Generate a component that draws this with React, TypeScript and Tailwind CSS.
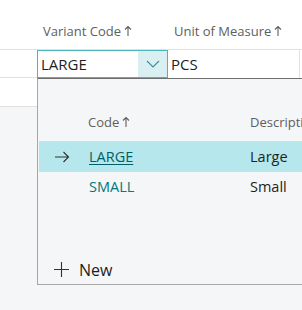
function SortArrow() {
  return (
    <svg width="8" height="12" viewBox="0 0 8 12" className="inline-block ml-[3px] -mt-[3px]">
      <path d="M4 11V1.5M1 4.5L4 1.5L7 4.5" fill="none" stroke="currentColor" strokeWidth="1.1" />
    </svg>
  );
}

function LookupPanel() {
  return (
    <div className="absolute left-[37px] top-[78px] right-0 h-[207px] bg-[#f5f6f8] border-l border-b border-t border-[#a6a6a6] border-t-[#6e6e6e] flex flex-col overflow-hidden">
      <div className="h-[62px] flex items-end pb-[9px] text-[13px] text-[#605e5c] whitespace-nowrap">
        <div className="w-[50px] shrink-0" />
        <div className="w-[162px] shrink-0">
          Code
          <SortArrow />
        </div>
        <div className="shrink-0">Description</div>
      </div>
      <div className="ml-[1px] h-[31px] flex items-center bg-[#b6e7ec] border-t border-[#dcdcdc] text-[14.5px] whitespace-nowrap">
        <div className="w-[50px] shrink-0 pl-[15px] text-[#323130]">
          <svg width="16" height="12" viewBox="0 0 16 12" className="block">
            <path d="M1 6H14.5M9.5 1L14.5 6L9.5 11" fill="none" stroke="#323130" strokeWidth="1.1" />
          </svg>
        </div>
        <div className="w-[161px] shrink-0 text-[#005f66] underline underline-offset-2">LARGE</div>
        <div className="text-[#201f1e]">Large</div>
      </div>
      <div className="ml-[1px] h-[29px] flex items-center text-[14.5px] whitespace-nowrap">
        <div className="w-[50px] shrink-0" />
        <div className="w-[161px] shrink-0 text-[#00787f]">SMALL</div>
        <div className="text-[#201f1e]">Small</div>
      </div>
      <div className="flex-1" />
      <div className="h-[26px] flex items-start pl-[15px] text-[16px] text-[#201f1e]">
        <svg width="17" height="17" viewBox="0 0 17 17" className="mt-[3px]">
          <path d="M8.5 1V16M1 8.5H16" fill="none" stroke="#323130" strokeWidth="1.1" />
        </svg>
        <span className="ml-[9px]">New</span>
      </div>
    </div>
  );
}

export default function App() {
  return (
    <div
      className="relative w-[302px] h-[310px] overflow-hidden bg-[#f5f6f8]"
      style={{ fontFamily: '"Open Sans", "Noto Sans", sans-serif' }}
    >
      <div className="h-[50px] bg-white border-b border-[#e1e1e1] flex items-end pb-[8px] text-[13px] text-[#605e5c] whitespace-nowrap">
        <div className="w-[43px] shrink-0" />
        <div className="w-[131px] shrink-0">
          Variant Code
          <SortArrow />
        </div>
        <div className="shrink-0">
          Unit of Measure
          <SortArrow />
        </div>
      </div>
      <div className="h-[28px] flex bg-white">
        <div className="w-[37px] shrink-0 border-b border-[#e1e1e1]" />
        <div className="w-[131px] shrink-0 h-[28px] border border-[#4fb3bb] flex">
          <div className="flex-1 pl-[3px] flex items-center text-[15px] text-[#201f1e]">LARGE</div>
          <div className="w-[29px] bg-[#d9eff1] flex items-center justify-center">
            <svg width="14" height="8" viewBox="0 0 14 8">
              <path d="M1 1L7 7L13 1" fill="none" stroke="#3c8f96" strokeWidth="1.1" />
            </svg>
          </div>
        </div>
        <div className="flex-1 pl-[3px] flex items-center text-[15px] text-[#201f1e] border-r border-[#e1e1e1] mr-[2px]">PCS</div>
      </div>
      <div className="w-[37px] h-[29px] bg-white border-b border-[#e1e1e1]" />
      <LookupPanel />
    </div>
  );
}
